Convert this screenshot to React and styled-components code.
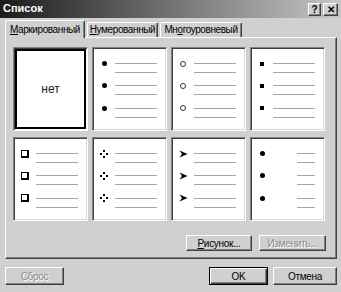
import styled, { createGlobalStyle } from 'styled-components';

const GlobalStyle = createGlobalStyle`
  html, body {
    margin: 0;
    padding: 0;
    background: #d0d0d0;
  }
  body {
    font-family: "Liberation Sans", Arial, sans-serif;
    font-size: 10px;
    color: #000;
  }
`;

const Window = styled.div`
  width: 341px;
  height: 292px;
  overflow: hidden;
  background: #d0d0d0;
  display: flex;
  flex-direction: column;
`;

// ---------------------------------------------------------------- title bar
const TitleBar = styled.div`
  height: 18px;
  display: flex;
  align-items: flex-start;
  justify-content: space-between;
  padding: 0 3px 0 3px;
  background: linear-gradient(to right, #1c1c1c 0%, #6a6a6a 45%, #c6c6c6 100%);
`;

const Title = styled.div`
  color: #fff;
  font-weight: bold;
  font-size: 11px;
  line-height: 14px;
  padding-top: 1px;
`;

const TitleButtons = styled.div`
  display: flex;
  gap: 2px;
  margin-top: 3px;
`;

const TitleButton = styled.div`
  width: ${(p) => p.$w || 14}px;
  height: 13px;
  box-sizing: border-box;
  background: #d0d0d0;
  border: 1px solid;
  border-color: #fff #404040 #404040 #fff;
  box-shadow: inset -1px -1px #808080;
  display: flex;
  align-items: center;
  justify-content: center;
  font-weight: bold;
  font-size: 10px;
  line-height: 10px;
`;

// ---------------------------------------------------------------- body
const Body = styled.div`
  flex: 1;
  display: flex;
  flex-direction: column;
  padding: 2px 4px 0 5px;
`;

const TabRow = styled.div`
  display: flex;
  align-items: flex-end;
  height: 17px;
  gap: 2px;
`;

const Tab = styled.div`
  position: relative;
  z-index: ${(p) => (p.$active ? 2 : 0)};
  box-sizing: border-box;
  width: ${(p) => p.$w}px;
  height: ${(p) => (p.$active ? 18 : 15)}px;
  margin-bottom: ${(p) => (p.$active ? -1 : 0)}px;
  padding-top: ${(p) => (p.$active ? 3 : 1)}px;
  background: #d0d0d0;
  border: 1px solid;
  border-bottom: none;
  border-color: #fff #404040 transparent #fff;
  border-radius: 2px 2px 0 0;
  box-shadow: inset -1px 0 #808080;
  text-align: center;
  font-size: 10px;
  letter-spacing: -0.4px;
  line-height: 12px;
  white-space: nowrap;
`;

const Panel = styled.div`
  width: 332px;
  box-sizing: border-box;
  border: 1px solid;
  border-color: #fff #404040 #404040 #fff;
  box-shadow: inset -1px -1px #808080;
  padding: 9px 9px 7px 7px;
  display: flex;
  flex-direction: column;
`;

const Grid = styled.div`
  display: grid;
  grid-template-columns: repeat(4, 75px);
  grid-auto-rows: 84px;
  column-gap: 4px;
  row-gap: 6px;
`;

const Cell = styled.div`
  box-sizing: border-box;
  background: #fff;
  border: 1px solid;
  border-color: #808080 #fff #fff #808080;
  box-shadow: inset 1px 1px #404040, inset -1px -1px #d8d8d8;
  padding: 15px 0 0 2px;
  display: flex;
  flex-direction: column;
`;

const NoneCell = styled.div`
  box-sizing: border-box;
  background: #fff;
  border: 1px solid;
  border-color: #808080 #fff #fff #808080;
  box-shadow: inset 1px 1px #404040;
  padding: 1px;
  display: flex;
`;

const NoneInner = styled.div`
  flex: 1;
  border: 2px solid #000;
  display: flex;
  align-items: center;
  justify-content: center;
  font-size: 12px;
  color: #222;
`;

const Item = styled.div`
  display: flex;
  align-items: flex-start;
  height: 23px;
`;

const Marker = styled.div`
  width: 18px;
  height: 9px;
  margin-top: -4px;
  display: flex;
  align-items: center;
  justify-content: center;
`;

const Lines = styled.div`
  display: flex;
  flex-direction: column;
  gap: 8px;
  margin-left: ${(p) => (p.$short ? 26 : 2)}px;
  width: ${(p) => (p.$short ? 18 : 42)}px;
`;

const Line = styled.div`
  height: 1px;
  background: #a4a4a4;
`;

const Dot = styled.span`
  width: 5px;
  height: 5px;
  border-radius: 50%;
  background: #000;
`;

const Ring = styled.span`
  width: 6px;
  height: 6px;
  box-sizing: border-box;
  border: 1px solid #333;
  border-radius: 50%;
`;

const SmallSquare = styled.span`
  width: 4px;
  height: 4px;
  background: #000;
`;

const Box = styled.span`
  width: 8px;
  height: 8px;
  box-sizing: border-box;
  border: 1px solid #000;
  border-right-width: 2px;
  border-bottom-width: 2px;
`;

const Diamond = () => (
  <svg width="8" height="8" viewBox="0 0 8 8">
    <rect x="3" y="0" width="2" height="2" fill="#000" />
    <rect x="0" y="3" width="2" height="2" fill="#000" />
    <rect x="6" y="3" width="2" height="2" fill="#000" />
    <rect x="3" y="6" width="2" height="2" fill="#000" />
  </svg>
);

const Arrow = () => (
  <svg width="9" height="8" viewBox="0 0 9 8">
    <path d="M0.5 0.5 L8.5 4 L0.5 7.5 L3 4 Z" fill="#000" />
  </svg>
);

const markers = {
  dot: Dot,
  ring: Ring,
  square: SmallSquare,
  box: Box,
  diamond: Diamond,
  arrow: Arrow,
};

function BulletCell({ kind, short }) {
  const Mark = markers[kind];
  return (
    <Cell>
      {[0, 1, 2].map((i) => (
        <Item key={i}>
          <Marker>
            <Mark />
          </Marker>
          <Lines $short={short}>
            <Line />
            <Line />
          </Lines>
        </Item>
      ))}
    </Cell>
  );
}

const PanelButtons = styled.div`
  display: flex;
  justify-content: flex-end;
  gap: 7px;
  margin-top: 14px;
  padding-right: 1px;
`;

const Button = styled.button`
  box-sizing: border-box;
  width: ${(p) => p.$w}px;
  height: ${(p) => p.$h || 16}px;
  padding: 0;
  background: #d0d0d0;
  font-family: "Liberation Sans", Arial, sans-serif;
  font-size: 10px;
  letter-spacing: -0.3px;
  color: ${(p) => (p.disabled ? '#8c8c8c' : '#000')};
  text-shadow: ${(p) => (p.disabled ? '1px 1px #fff' : 'none')};
  border: 1px solid;
  border-color: ${(p) => (p.$default ? '#000' : '#fff #404040 #404040 #fff')};
  box-shadow: ${(p) =>
    p.$default
      ? 'inset 1px 1px #fff, inset -1px -1px #404040, inset -2px -2px #808080'
      : 'inset -1px -1px #808080'};
  cursor: default;
`;

const Footer = styled.div`
  display: flex;
  align-items: center;
  margin-top: 8px;
  width: 332px;
`;

const FooterRight = styled.div`
  margin-left: auto;
  display: flex;
  gap: 5px;
`;

export default function App() {
  return (
    <>
      <GlobalStyle />
      <Window>
        <TitleBar>
          <Title>Список</Title>
          <TitleButtons>
            <TitleButton $w={13}>?</TitleButton>
            <TitleButton $w={15}>✕</TitleButton>
          </TitleButtons>
        </TitleBar>
        <Body>
          <TabRow>
            <Tab $active $w={80}>
              <u>М</u>аркированный
            </Tab>
            <Tab $w={71}>
              <u>Н</u>умерованный
            </Tab>
            <Tab $w={82}>
              Мн<u>о</u>гоуровневый
            </Tab>
          </TabRow>
          <Panel>
            <Grid>
              <NoneCell>
                <NoneInner>нет</NoneInner>
              </NoneCell>
              <BulletCell kind="dot" />
              <BulletCell kind="ring" />
              <BulletCell kind="square" />
              <BulletCell kind="box" />
              <BulletCell kind="diamond" />
              <BulletCell kind="arrow" />
              <BulletCell kind="dot" short />
            </Grid>
            <PanelButtons>
              <Button $w={66}>
                <u>Р</u>исунок...
              </Button>
              <Button $w={67} disabled>
                Изменить...
              </Button>
            </PanelButtons>
          </Panel>
          <Footer>
            <Button $w={59} $h={18} disabled>
              Сброс
            </Button>
            <FooterRight>
              <Button $w={59} $h={18} $default>
                OK
              </Button>
              <Button $w={64} $h={18}>
                Отмена
              </Button>
            </FooterRight>
          </Footer>
        </Body>
      </Window>
    </>
  );
}
